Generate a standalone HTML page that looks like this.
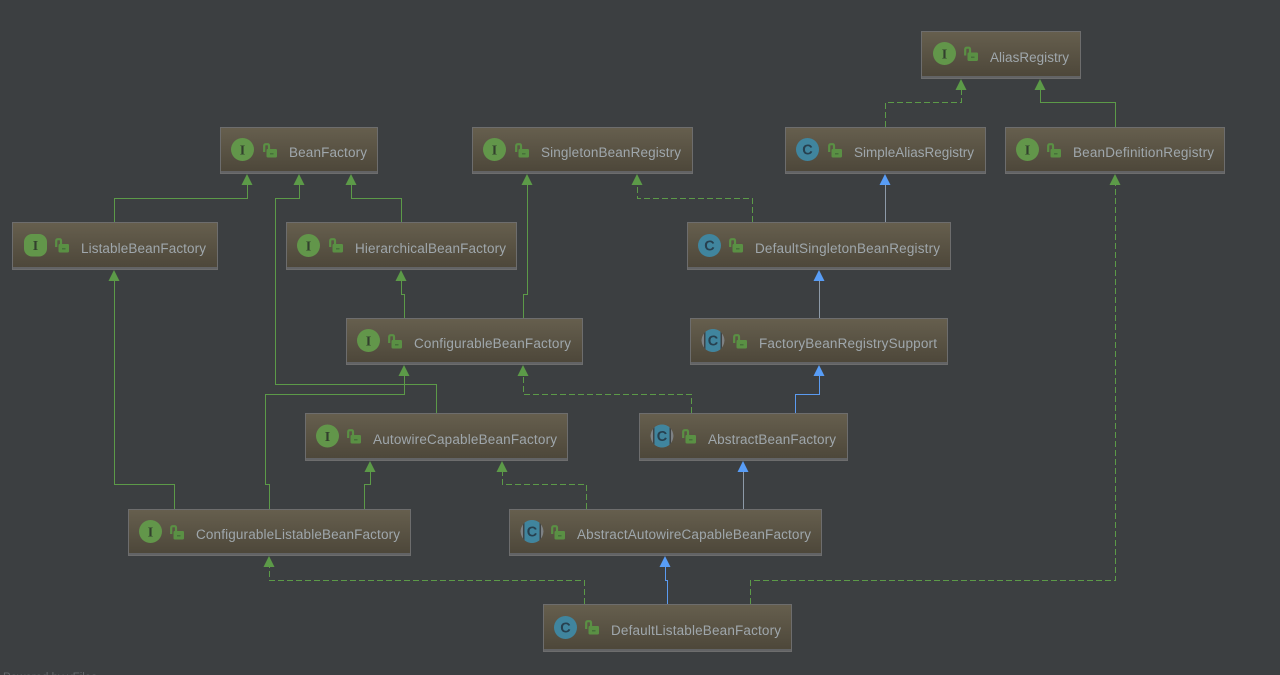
<!DOCTYPE html>
<html><head><meta charset="utf-8"><title>DefaultListableBeanFactory diagram</title>
<style>
html,body{margin:0;padding:0;background:#3c3f41;width:1280px;height:675px;overflow:hidden}
svg{display:block}
text{font-family:"Liberation Sans",sans-serif}
.n{font-size:13.5px;fill:#9fa7ac}
.i{font-family:"Liberation Serif",serif;font-size:14px;font-weight:bold;fill:#33402e;text-anchor:middle}
.c{font-size:14.5px;font-weight:bold;fill:#27404f;text-anchor:middle}
.g{fill:none;stroke:#5c9a48;stroke-width:1}
.d{fill:none;stroke:#5c9a48;stroke-width:1;stroke-dasharray:6 3}
.b{fill:none;stroke:#5b9bf0;stroke-width:1}
.y{fill:none;stroke:#8d9aa8;stroke-width:1}
.ag{fill:#5c9a48}.ab{fill:#589df6}
.box{fill:url(#bg);stroke:#6d6d6d;stroke-width:1}
.bot{fill:#626365}
.ic{fill:#62964a}.cc{fill:#40859e}.ab1{fill:#7d8184}.ab2{fill:#40859e}
.lk{fill:none;stroke:#5a9044;stroke-width:2.200}.lb{fill:#5a9044}.lh{fill:#47703a}
</style></head><body>
<svg xmlns="http://www.w3.org/2000/svg" width="1280" height="675" viewBox="0 0 1280 675">
<defs>
<linearGradient id="bg" x1="0" y1="0" x2="0" y2="1"><stop offset="0" stop-color="#665f4e"/><stop offset="1" stop-color="#4c4639"/></linearGradient>
<clipPath id="cir"><circle cx="0" cy="0" r="11.500"/></clipPath>
<g id="lock"><path class="lk" d="M1.200 9V3Q1.200 1.200 3 1.200H4.600Q6 1.200 6 3V7"/><rect class="lb" x="3.500" y="6" width="10.500" height="8.500" rx="1.200"/><rect class="lh" x="7" y="10" width="3.500" height="1.500"/></g>
<g id="abs"><g clip-path="url(#cir)"><circle class="ab1" cx="0" cy="0" r="11.500"/><rect x="-9" y="-12" width="1.500" height="24" fill="#3f4345"/><rect x="7.500" y="-12" width="1.500" height="24" fill="#3f4345"/><rect class="ab2" x="-7.500" y="-11.500" width="15" height="23"/></g></g>
</defs>
<rect width="1280" height="675" fill="#3c3f41"/>

<path class="d" d="M885.500 127V102.500H961.500V90"/>
<path class="g" d="M1115.500 127V102.500H1040.500V90"/>
<path class="y" d="M885.500 222V185"/>
<path class="d" d="M752.500 222V198.500H637.500V185"/>
<path class="g" d="M114.500 222V198.500H247.500V185"/>
<path class="g" d="M436.500 413V384.500H275.500V198.500H299.500V185"/>
<path class="g" d="M401.500 222V198.500H351.500V185"/>
<path class="g" d="M404.500 318V294.500H401.500V281"/>
<path class="g" d="M523.500 318V294.500H527.500V185"/>
<path class="y" d="M819.500 318V281"/>
<path class="b" d="M795.500 413V394.500H819.500V376"/>
<path class="d" d="M691.500 413V394.500H523.500V376"/>
<path class="g" d="M269.500 509V484.500H265.500V394.500H404.500V376"/>
<path class="g" d="M364.500 509V484.500H370.500V472"/>
<path class="g" d="M174.500 509V484.500H114.500V281"/>
<path class="d" d="M586.500 509V484.500H502.500V472"/>
<path class="y" d="M743.500 509V472"/>
<path class="d" d="M584.500 604V580.500H269.500V567"/>
<path class="b" d="M667.500 604V580.500H665.500V567"/>
<path class="d" d="M750.500 604V580.500H1115.500V185"/>

<path class="ag" d="M961 79l-5.500 11h11z"/>
<path class="ag" d="M1040 79l-5.500 11h11z"/>
<path class="ab" d="M885 174l-5.500 11h11z"/>
<path class="ag" d="M637 174l-5.500 11h11z"/>
<path class="ag" d="M247 174l-5.500 11h11z"/>
<path class="ag" d="M299 174l-5.500 11h11z"/>
<path class="ag" d="M351 174l-5.500 11h11z"/>
<path class="ag" d="M527 174l-5.500 11h11z"/>
<path class="ag" d="M1115 174l-5.500 11h11z"/>
<path class="ag" d="M401 270l-5.500 11h11z"/>
<path class="ag" d="M114 270l-5.500 11h11z"/>
<path class="ab" d="M819 270l-5.500 11h11z"/>
<path class="ag" d="M404 365l-5.500 11h11z"/>
<path class="ag" d="M523 365l-5.500 11h11z"/>
<path class="ab" d="M819 365l-5.500 11h11z"/>
<path class="ag" d="M370 461l-5.500 11h11z"/>
<path class="ag" d="M502 461l-5.500 11h11z"/>
<path class="ab" d="M743 461l-5.500 11h11z"/>
<path class="ag" d="M269 556l-5.500 11h11z"/>
<path class="ab" d="M665 556l-5.500 11h11z"/>

<rect class="box" x="921.500" y="31.500" width="159" height="47"/><rect class="bot" x="922" y="76" width="158" height="2"/>
<circle class="ic" cx="944.500" cy="53.500" r="11.500"/><text class="i" x="944.500" y="58.500">I</text>
<use href="#lock" x="964" y="46.500"/><text class="n" x="990" y="62" textLength="79">AliasRegistry</text>

<rect class="box" x="220.500" y="127.500" width="157" height="46"/><rect class="bot" x="221" y="171" width="156" height="2"/>
<circle class="ic" cx="242.500" cy="149.500" r="11.500"/><text class="i" x="242.500" y="154.500">I</text>
<use href="#lock" x="263" y="143"/><text class="n" x="289" y="157" textLength="78">BeanFactory</text>

<rect class="box" x="472.500" y="127.500" width="220" height="46"/><rect class="bot" x="473" y="171" width="219" height="2"/>
<circle class="ic" cx="494.500" cy="149.500" r="11.500"/><text class="i" x="494.500" y="154.500">I</text>
<use href="#lock" x="515" y="143"/><text class="n" x="541" y="157" textLength="140">SingletonBeanRegistry</text>

<rect class="box" x="785.500" y="127.500" width="200" height="46"/><rect class="bot" x="786" y="171" width="199" height="2"/>
<circle class="cc" cx="807.500" cy="149.500" r="11.500"/><text class="c" x="807.500" y="154.500">C</text>
<use href="#lock" x="828" y="143"/><text class="n" x="854" y="157" textLength="120">SimpleAliasRegistry</text>

<rect class="box" x="1005.500" y="127.500" width="219" height="46"/><rect class="bot" x="1006" y="171" width="218" height="2"/>
<circle class="ic" cx="1027.500" cy="149.500" r="11.500"/><text class="i" x="1027.500" y="154.500">I</text>
<use href="#lock" x="1047" y="143"/><text class="n" x="1073" y="157" textLength="141">BeanDefinitionRegistry</text>

<rect class="box" x="12.500" y="222.500" width="205" height="47"/><rect class="bot" x="13" y="267" width="204" height="2"/>
<rect class="ic" x="24" y="234" width="23" height="22.500" rx="8"/><text class="i" x="35.500" y="250">I</text>
<use href="#lock" x="55" y="238"/><text class="n" x="81" y="253" textLength="125">ListableBeanFactory</text>

<rect class="box" x="286.500" y="222.500" width="230" height="47"/><rect class="bot" x="287" y="267" width="229" height="2"/>
<circle class="ic" cx="308.500" cy="245.500" r="11.500"/><text class="i" x="308.500" y="250.500">I</text>
<use href="#lock" x="329" y="238"/><text class="n" x="355" y="253" textLength="151">HierarchicalBeanFactory</text>

<rect class="box" x="687.500" y="222.500" width="263" height="47"/><rect class="bot" x="688" y="267" width="262" height="2"/>
<circle class="cc" cx="709.500" cy="245.500" r="11.500"/><text class="c" x="709.500" y="250.500">C</text>
<use href="#lock" x="729" y="238"/><text class="n" x="755" y="253" textLength="185">DefaultSingletonBeanRegistry</text>

<rect class="box" x="346.500" y="318.500" width="236" height="46"/><rect class="bot" x="347" y="362" width="235" height="2"/>
<circle class="ic" cx="368.500" cy="340.500" r="11.500"/><text class="i" x="368.500" y="345.500">I</text>
<use href="#lock" x="388" y="334"/><text class="n" x="414" y="348" textLength="157">ConfigurableBeanFactory</text>

<rect class="box" x="690.500" y="318.500" width="257" height="46"/><rect class="bot" x="691" y="362" width="256" height="2"/>
<use href="#abs" x="713" y="340.500"/><text class="c" x="713" y="345.500">C</text>
<use href="#lock" x="733" y="334"/><text class="n" x="759" y="348" textLength="178">FactoryBeanRegistrySupport</text>

<rect class="box" x="305.500" y="413.500" width="262" height="47"/><rect class="bot" x="306" y="458" width="261" height="2"/>
<circle class="ic" cx="327.500" cy="436" r="11.500"/><text class="i" x="327.500" y="441">I</text>
<use href="#lock" x="347" y="429"/><text class="n" x="373" y="444" textLength="184">AutowireCapableBeanFactory</text>

<rect class="box" x="639.500" y="413.500" width="208" height="47"/><rect class="bot" x="640" y="458" width="207" height="2"/>
<use href="#abs" x="662" y="436"/><text class="c" x="662" y="441">C</text>
<use href="#lock" x="682" y="429"/><text class="n" x="708" y="444" textLength="128">AbstractBeanFactory</text>

<rect class="box" x="128.500" y="509.500" width="282" height="46"/><rect class="bot" x="129" y="553" width="281" height="2"/>
<circle class="ic" cx="150.500" cy="531.500" r="11.500"/><text class="i" x="150.500" y="536.500">I</text>
<use href="#lock" x="170" y="525"/><text class="n" x="196" y="539" textLength="204">ConfigurableListableBeanFactory</text>

<rect class="box" x="509.500" y="509.500" width="312" height="46"/><rect class="bot" x="510" y="553" width="311" height="2"/>
<use href="#abs" x="532" y="531.500"/><text class="c" x="532" y="536.500">C</text>
<use href="#lock" x="551" y="525"/><text class="n" x="577" y="539" textLength="234">AbstractAutowireCapableBeanFactory</text>

<rect class="box" x="543.500" y="604.500" width="248" height="47"/><rect class="bot" x="544" y="649" width="247" height="2"/>
<circle class="cc" cx="565.500" cy="627.500" r="11.500"/><text class="c" x="565.500" y="632.500">C</text>
<use href="#lock" x="585" y="620"/><text class="n" x="611" y="635" textLength="170">DefaultListableBeanFactory</text>

<text x="3" y="681" font-size="11.500" fill="#63686b">Powered by yFiles</text>
</svg>
</body></html>
